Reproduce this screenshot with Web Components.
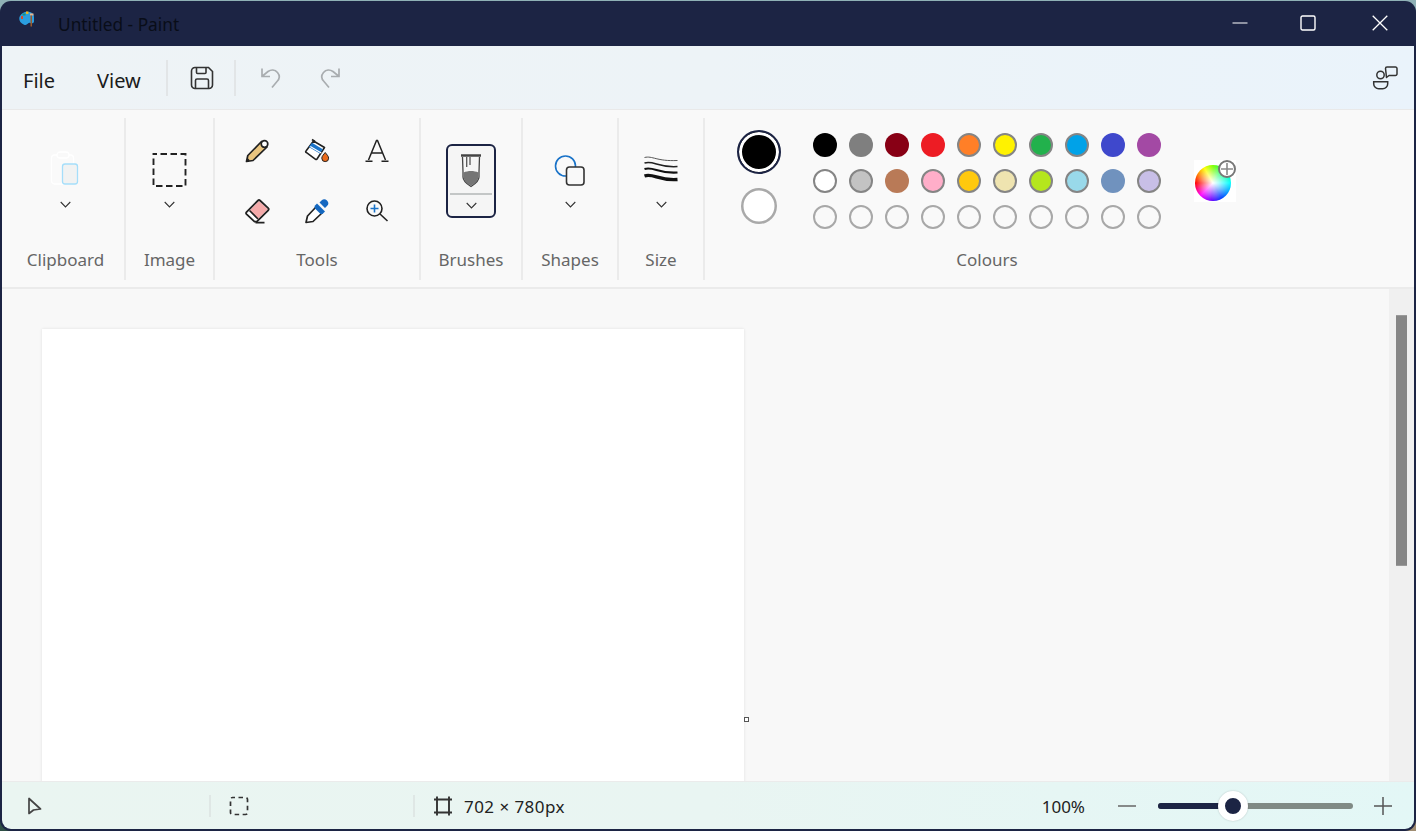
<!DOCTYPE html>
<html lang="en">
<head>
<meta charset="utf-8">
<title>Untitled - Paint</title>
<style>
html,body{margin:0;height:100%;overflow:hidden}
body{width:1416px;height:831px;font-family:"Noto Sans","Open Sans",sans-serif;
background:linear-gradient(90deg,#2f4f45 0,#2f4f45 50%,#a08d72 50%) bottom/100% 20px no-repeat,#8fb1b6}
</style>
</head>
<body>
<app-window>
  <title-bar slot="title" caption="Untitled - Paint"></title-bar>
  <menu-bar slot="menu"></menu-bar>
  <ribbon-bar slot="ribbon">
    <ribbon-group label="Clipboard" w="124" pad="5"><drop-tool icon="clipboard"></drop-tool></ribbon-group>
    <ribbon-group label="Image" w="89"><drop-tool icon="select"></drop-tool></ribbon-group>
    <ribbon-group label="Tools" w="206"><tool-grid></tool-grid></ribbon-group>
    <ribbon-group label="Brushes" w="102"><drop-tool icon="brush" active></drop-tool></ribbon-group>
    <ribbon-group label="Shapes" w="96"><drop-tool icon="shapes"></drop-tool></ribbon-group>
    <ribbon-group label="Size" w="86"><drop-tool icon="size"></drop-tool></ribbon-group>
    <ribbon-group label="Colours" w="564" plain><colour-panel></colour-panel></ribbon-group>
  </ribbon-bar>
  <canvas-area slot="canvas"></canvas-area>
  <status-bar slot="status"></status-bar>
</app-window>
<script>
const ICONS = {
  save:[28,'<path d="M3.500 7a3.500 3.500 0 0 1 3.500-3.500h13.500l4 4V21a3.500 3.500 0 0 1-3.500 3.500H7A3.500 3.500 0 0 1 3.500 21z" fill="none" stroke="#333" stroke-width="1.600"/><path d="M8.500 4v4.500a1 1 0 0 0 1 1h7.500a1 1 0 0 0 1-1V4M7.500 24v-7.500a1.500 1.500 0 0 1 1.500-1.500h10a1.500 1.500 0 0 1 1.500 1.500V24" fill="none" stroke="#333" stroke-width="1.600"/>'],
  undo:[24,'<path d="M3 2.500v8h8M3.500 10 9 5.500c3-2 7-2 9.500 1 2.500 3 2 6.500-.5 9L13 21.500" fill="none" stroke="#a9adb0" stroke-width="1.700"/>'],
  redo:[24,'<path d="M21 2.500v8h-8M20.500 10 15 5.500c-3-2-7-2-9.500 1-2.500 3-2 6.500.5 9L11 21.500" fill="none" stroke="#a9adb0" stroke-width="1.700"/>'],
  people:[26,'<circle cx="8.500" cy="10" r="3.700" fill="none" stroke="#333" stroke-width="1.500"/><path d="M1.700 16.700h14v2a5 5 0 0 1-5 5h-4a5 5 0 0 1-5-5z" fill="none" stroke="#333" stroke-width="1.500"/><path d="M13.500 3.500a1.500 1.500 0 0 1 1.500-1.500h8.500a1.500 1.500 0 0 1 1.500 1.500v5.500a1.500 1.500 0 0 1-1.500 1.500h-6.500l-2.500 2z" fill="none" stroke="#333" stroke-width="1.500" stroke-linejoin="round"/>'],
  clipboard:[34,'<rect x="2.500" y="5" width="22" height="29" rx="3" fill="#fff" fill-opacity=".25" stroke="#fff" stroke-width="1.300"/><rect x="8" y="2" width="12" height="6" rx="3" fill="#f9f9f9" stroke="#fff" stroke-width="1.300"/><rect x="13.500" y="14" width="15" height="20" rx="2.500" fill="#f1f2f2" stroke="#a5defa" stroke-width="1.300"/>'],
  select:[35,'<rect x="1.500" y="2" width="32" height="32" fill="none" stroke="#222" stroke-width="1.900" stroke-dasharray="6.500 3.500" stroke-dashoffset="3"/>'],
  pencil:[24,'<path d="M1.500 22.500 2.800 16.500 16.500 2.500l5.500 5.500L8 21.500z" fill="#eac57f" stroke="#222" stroke-width="1.700" stroke-linejoin="round"/><circle cx="19.500" cy="5" r="3.300" fill="#fff" stroke="#222" stroke-width="1.700"/><path d="M1.200 22.800 2.200 18.500l2.800 3z" fill="#222"/>'],
  bucket:[28,'<path d="M9 2.500l3 2" stroke="#222" stroke-width="1.600"/><path d="M3 14 10.500 4l11 6.500L14 22a1 1 0 0 1-1.400.3L3.200 15.400A1 1 0 0 1 3 14z" fill="#fff" stroke="#222" stroke-width="1.600" stroke-linejoin="round"/><path d="M9 5.800 5.800 10l11 6.500 3-4.300z" fill="#1a73c8"/><path d="M7.300 9.500l11 6.400" stroke="#fff" stroke-width="1.200"/><path d="M22.200 15.500c1.500 2 3.400 3.600 3.400 5.700a3.400 3.400 0 0 1-6.800 0c0-2.100 1.900-3.700 3.400-5.700z" fill="#ea6a1a" stroke="#222" stroke-width="1"/>'],
  text:[24,'<path d="M3.500 21 11.500 1.500h1L20.500 21M6.500 14h11" fill="none" stroke="#222" stroke-width="1.500"/><path d="M.5 22.300h7M16.500 22.300h7" stroke="#222" stroke-width="1.500"/>'],
  eraser:[25,'<path d="M1.500 13.200 13 1.500a1.500 1.500 0 0 1 2 0l8.200 7.700a1.500 1.500 0 0 1 0 2.100L11.800 22.600H9.500l-8-7.400a1.500 1.500 0 0 1 0-2z" fill="#fff"/><path d="M4.500 11.500 14 2l9 8.300-10 9.700z" fill="#f4aaaa"/><path d="M1.500 13.200 13 1.500a1.500 1.500 0 0 1 2 0l8.200 7.700a1.500 1.500 0 0 1 0 2.100L11.800 22.600H9.500l-8-7.400a1.500 1.500 0 0 1 0-2z" fill="none" stroke="#222" stroke-width="1.800"/><path d="M4.500 11.500l8.500 8.500M10.500 23.600h9" stroke="#222" stroke-width="1.600"/>'],
  dropper:[25,'<path d="M1 23.500 2.500 17 11 8l6 6L8 22.500z" fill="#fff" stroke="#222" stroke-width="1.700" stroke-linejoin="round"/><path d="M10 6.500l2-2 8 8-2 2a2.500 2.500 0 0 1-3 0l-5-5a2.500 2.500 0 0 1 0-3z" fill="#1568c0"/><path d="M14.500 3.500l2-2a3.800 3.800 0 0 1 5.500 5.500l-2 2z" fill="#1568c0"/>'],
  zoomin:[24,'<circle cx="9.500" cy="9.500" r="7.500" fill="none" stroke="#222" stroke-width="1.600"/><path d="M15 15l7.500 7" stroke="#222" stroke-width="1.600"/><path d="M5.500 9.500h8M9.500 5.500v8" stroke="#1a73c8" stroke-width="1.600"/>'],
  brush:[24,'<path d="M3.500 5 4 20v5c0 3.500 4 7 8 9.500 4-2.500 8-6 8-9.500v-5l.5-15" fill="#f6f6f6" stroke="#444" stroke-width="1.300" stroke-linejoin="round"/><path d="M4.500 20.500c4.500-2 10.500-2 15 0V25c0 3.300-3.800 6.600-7.500 9-3.700-2.400-7.500-5.700-7.500-9z" fill="#757575"/><path d="M2 3.500h20" stroke="#444" stroke-width="2.600"/><path d="M7.700 5v10M11 5v8" stroke="#555" stroke-width="1.300"/>'],
  shapes:[32,'<circle cx="11.500" cy="12" r="10" fill="none" stroke="#1a73c8" stroke-width="1.600"/><rect x="12.500" y="13" width="17.500" height="18" rx="3" fill="#f9f9f9" stroke="#333" stroke-width="1.600"/>'],
  size:[36,'<g transform="translate(0 3)"><path d="M1.500 2.500c8-2 12 4 33 3" fill="none" stroke="#555" stroke-width="1"/><path d="M1.500 8c9-3 14 5 33 3.500" fill="none" stroke="#222" stroke-width="1.500"/><path d="M1.500 14c9-3 14 5 33 3.500" fill="none" stroke="#111" stroke-width="2.100"/><path d="M1.500 21c9-3 14 5 33 3.500" fill="none" stroke="#111" stroke-width="3.300"/></g>'],
  cursor:[18,'<path d="M3 1.500v15l4.500-3.500 7-1z" fill="none" stroke="#444" stroke-width="1.700" stroke-linejoin="round"/>'],
  sel2:[20,'<rect x="1.500" y="1.500" width="17" height="17" rx="2" fill="none" stroke="#333" stroke-width="1.700" stroke-dasharray="4.500 3.500" stroke-dashoffset="2"/>'],
  canvas:[20,'<path d="M4 .5V19.500M16 .5V19.500M1 3.500H19M1 16.500H19" stroke="#333" stroke-width="1.900" fill="none"/>'],
  palette:[16,'<path d="M6 1c4-1.200 9 .5 9 5v4.500c0 2-3 2.500-4 1.500-1.200-1-2.500 2-4.500 2S.5 11.500.3 8C.1 5 3 1.800 6 1z" fill="#2a9ee0"/><rect x="2" y="5" width="2" height="3" fill="#d84a2a"/><rect x="3.500" y="2.500" width="3" height="2" fill="#1f8f7d"/><rect x="7" y=".5" width="2.400" height="2.400" fill="#f6b81a"/><rect x="11" y="2.500" width="3.500" height="2" fill="#e9b48d"/><rect x="11.500" y="4.500" width="1.500" height="11" fill="#9b5a2a"/>']
};
const EXTRA_H={brush:36,clipboard:40,select:36};
function reg(name,css,html,init){
  customElements.define(name,class extends HTMLElement{
    connectedCallback(){
      if(this.shadowRoot)return;
      const r=this.attachShadow({mode:'open'});
      r.innerHTML='<style>'+css+'</style>'+(typeof html==='function'?html(this):html);
      if(init)init(this,r);
    }
  });
}
reg('ui-icon',':host{display:inline-flex;flex:none;line-height:0}svg{display:block}',el=>{
  const n=el.getAttribute('name'),[s,body]=ICONS[n],h=EXTRA_H[n]||s;
  const px=+el.getAttribute('size')||s,hp=px*h/s;
  return `<svg xmlns="http://www.w3.org/2000/svg" width="${px}" height="${hp}" viewBox="0 0 ${s} ${h}">${body}</svg>`;
});
reg('app-window',`:host{display:flex;flex-direction:column;box-sizing:border-box;width:1416px;height:830px;margin-top:1px;
background:#1c2444;border-radius:11px;padding:0 2px 2px;overflow:hidden;color:#1b1b1b}`,
`<slot name="title"></slot><slot name="menu"></slot><slot name="ribbon"></slot><slot name="canvas"></slot><slot name="status"></slot>`);
reg('title-bar',`:host{display:flex;align-items:center;height:45px;flex:none}
.logo{margin:0 0 0 17px;align-self:flex-start;padding-top:9px}
.cap{margin-left:23px;font-size:17.300px;color:#090d18;padding-top:2px;white-space:nowrap}
.ctl{margin-left:auto;display:flex;height:100%}
.b{width:71px;box-sizing:border-box;display:flex;align-items:center;justify-content:center;padding-bottom:1px}
.mn{padding-left:2px}.mx{padding-right:3px}.cl{width:69px}
svg{display:block}`,el=>`<div class="logo"><ui-icon name="palette"></ui-icon></div><span class="cap">${el.getAttribute('caption')}</span>
<div class="ctl"><div class="b mn"><svg width="16" height="16"><path d="M.5 8H15.500" stroke="#fff" stroke-width="1.200"/></svg></div>
<div class="b mx"><svg width="16" height="16"><rect x="1" y="1" width="14" height="14" rx="1.500" fill="none" stroke="#fff" stroke-width="1.400"/></svg></div>
<div class="b cl"><svg width="16" height="16"><path d="M.7.7 15.300 15.300M15.300.7.7 15.300" stroke="#fff" stroke-width="1.300"/></svg></div></div>`);
reg('menu-bar',`:host{display:flex;align-items:center;height:64px;flex:none;background:linear-gradient(90deg,#eef3f6,#edf3f7 50%,#eaf3fb);border-bottom:1px solid #e9e9e9;box-sizing:border-box;font-size:20px}
.f,.v{padding-top:6px}
.f{margin-left:21px}.v{margin-left:42px}
.s{width:2px;height:36px;background:#e2e5e7;flex:none}
.s1{margin-left:25px}.s2{margin-left:18px}
.ic{display:flex}.sv{margin-left:20px}.u{margin-left:23px}.r{margin-left:35px}.p{margin-left:auto;margin-right:16px}`,
`<span class="f">File</span><span class="v">View</span><div class="s s1"></div>
<div class="ic sv"><ui-icon name="save"></ui-icon></div><div class="s s2"></div>
<div class="ic u"><ui-icon name="undo"></ui-icon></div><div class="ic r"><ui-icon name="redo"></ui-icon></div>
<div class="ic p"><ui-icon name="people"></ui-icon></div>`);
reg('ribbon-bar',`:host{display:flex;height:179px;flex:none;box-sizing:border-box;padding:8px 0 7px;background:#f9f9f9;border-bottom:2px solid #ebebeb}`,`<slot></slot>`);
reg('ribbon-group',`:host{display:flex;flex-direction:column;flex:none;box-sizing:border-box;border-right:2px solid #ebebeb;height:162px}
:host([plain]){border-right:0}
.b{flex:1;display:flex;justify-content:center;min-height:0}
.l{text-align:center;font-size:17px;color:#666;line-height:24px;padding-bottom:8px}`,
el=>`<div class="b"><slot></slot></div><div class="l">${el.getAttribute('label')}</div>`,
el=>{el.style.width=el.getAttribute('w')+'px';if(el.hasAttribute('pad'))el.style.paddingLeft=el.getAttribute('pad')+'px'});
reg('drop-tool',`:host{display:flex;flex-direction:column;box-sizing:border-box;width:50px;height:74px;margin-top:26px;align-items:center;border-radius:6px;border:2px solid transparent}
:host([active]){background:#f5f5f5;border-color:#1c2444}
.i{height:47px;display:flex;align-items:center;justify-content:center;box-sizing:border-box;width:100%}
.c{height:23px;display:flex;align-items:center;justify-content:center;width:100%;box-sizing:border-box}
:host([active]) .c{border-top:2px solid #c3c6c6;width:42px}
svg{display:block}`,el=>{
  const n=el.getAttribute('icon');
  return `<div class="i"><ui-icon name="${n}"></ui-icon></div><div class="c"><svg width="11" height="7"><path d="M.7 1 5.500 6 10.300 1" fill="none" stroke="#333" stroke-width="1.100"/></svg></div>`});
reg('tool-grid',`:host{display:grid;grid-template-columns:repeat(3,60px);grid-auto-rows:60px;margin-top:3px;align-self:flex-start}
div{display:flex;align-items:center;justify-content:center}`,
['pencil','bucket','text','eraser','dropper','zoomin'].map(n=>`<div><ui-icon name="${n}"></ui-icon></div>`).join(''));
reg('colour-panel',`:host{display:flex;flex:1;padding-left:32px;align-items:flex-start}
.cur{width:44px;display:flex;flex-direction:column;align-items:center;margin-top:12px}
.fg{box-sizing:border-box;width:44px;height:44px;border-radius:50%;border:2px solid #1c2444;background:#000;box-shadow:inset 0 0 0 3px #fff}
.bg{box-sizing:border-box;width:36px;height:36px;border-radius:50%;box-shadow:inset 0 0 0 2.500px #a9a9a9;background:#fff;margin-top:14px}
.grid{display:grid;grid-template-columns:repeat(10,24px);grid-auto-rows:24px;gap:12px;margin:15px 0 0 32px}
.wheel{position:relative;width:42px;height:42px;margin:42px 0 0 33px;background:#fff;flex:none}
.w{position:absolute;left:1px;top:5px;width:36px;height:36px;border-radius:50%;
background:radial-gradient(circle,#fff 0,rgba(255,255,255,.65) 25%,rgba(255,255,255,0) 70%),conic-gradient(from 0deg,#7dff00,#00ff66 40deg,#00ffff 90deg,#0040ff 150deg,#6a00ff 185deg,#ff00ff 225deg,#ff0000 270deg,#ff8000 300deg,#ffff00 330deg,#7dff00)}
.p{position:absolute;left:24px;top:0;box-sizing:border-box;width:18px;height:18px;border-radius:50%;background:#fff;border:2px solid #777;display:flex;align-items:center;justify-content:center}
svg{display:block}`,
()=>{
 const r=[['#000'],['#7f7f7f'],['#880015'],['#ed1c24'],['#ff7f27',1],['#fff200',1],['#22b14c',1],['#00a2e8',1],['#3f48cc'],['#a349a4'],
 ['#fff',1],['#c3c3c3',1],['#b97a57'],['#ffaec9',1],['#ffc90e',1],['#efe4b0',1],['#b5e61d',1],['#99d9ea',1],['#7092be'],['#c8bfe7',1]];
 let g=r.map(([c,b])=>`<colour-swatch c="${c}"${b?' ring':''}></colour-swatch>`).join('');
 for(let i=0;i<10;i++)g+='<colour-swatch empty></colour-swatch>';
 return `<div class="cur"><div class="fg"></div><div class="bg"></div></div><div class="grid">${g}</div>
 <div class="wheel"><div class="w"></div><div class="p"><svg width="12" height="12"><path d="M6 0V12M0 6H12" stroke="#8a8a8a" stroke-width="1.600"/></svg></div></div>`});
reg('colour-swatch',`:host{display:block;width:24px;height:24px;box-sizing:border-box;border-radius:50%;background:var(--c,transparent)}
:host([ring]){border:2px solid #858585}
:host([empty]){border:2px solid #a8a8a8;background:transparent}`,'',el=>{
 if(el.hasAttribute('c'))el.style.setProperty('--c',el.getAttribute('c'))});
reg('canvas-area',`:host{display:flex;flex:1;min-height:0;background:#f8f8f8;border-bottom:1px solid #ebebeb}
.v{flex:1;min-width:0;overflow:hidden;padding:40px 0 0 40px}
.page{position:relative;width:702px;height:780px;background:#fff;box-shadow:0 0 3px rgba(0,0,0,.1)}
.h{position:absolute;left:702px;top:388px;width:5px;height:5px;box-sizing:border-box;background:#fff;border:1px solid #555}
.sb{width:25px;flex:none;background:#f0f0f0;padding:26px 7px 0;box-sizing:border-box}
.t{height:251px;background:#868686;border-top:1px solid #9a9a9a;border-bottom:1px solid #9a9a9a;box-sizing:border-box}`,
`<div class="v"><div class="page"><div class="h"></div></div></div><div class="sb"><div class="t"></div></div>`);
reg('status-bar',`:host{display:flex;align-items:center;height:47px;flex:none;box-sizing:border-box;font-size:17px;color:#222;padding-top:1px;
background:linear-gradient(90deg,#eaf5f1,#e9f5f2 50%,#e3f7f6);border-radius:0 0 9px 9px}
.a{width:207px;box-sizing:border-box;padding-left:24px;display:flex;align-items:center}
.s{width:2px;height:22px;background:#dfe7e5;flex:none}
.b{width:202px;box-sizing:border-box;padding-left:18px;display:flex}
.c{display:flex;align-items:center;gap:11px;padding-left:18px}
.c span{letter-spacing:.45px}
.z{margin-left:auto;display:flex;align-items:center;padding-right:22px}
.m{margin-left:33px}.sl{margin-left:22px}.pl{margin-left:21px}
svg{display:block}`,
`<div class="a"><ui-icon name="cursor"></ui-icon></div><div class="s"></div>
<div class="b"><ui-icon name="sel2"></ui-icon></div><div class="s"></div>
<div class="c"><ui-icon name="canvas"></ui-icon><span>702 × 780px</span></div>
<div class="z"><span>100%</span>
<svg class="m" width="18" height="4"><path d="M0 2H18" stroke="#666" stroke-width="1.500"/></svg>
<zoom-slider class="sl"></zoom-slider>
<svg class="pl" width="18" height="18"><path d="M0 9H18M9 0V18" stroke="#555" stroke-width="1.500"/></svg></div>`);
reg('zoom-slider',`:host{display:block;position:relative;width:195px;height:6px;border-radius:3px;background:#808a85}
.f{width:68px;height:100%;background:#1c2444;border-radius:3px 0 0 3px}
.k{position:absolute;left:60px;top:-12px;box-sizing:border-box;width:30px;height:30px;border-radius:50%;background:#1c2444;border:7px solid #fff;box-shadow:0 0 2px rgba(0,0,0,.2)}`,
`<div class="f"></div><div class="k"></div>`);
</script>
</body>
</html>
